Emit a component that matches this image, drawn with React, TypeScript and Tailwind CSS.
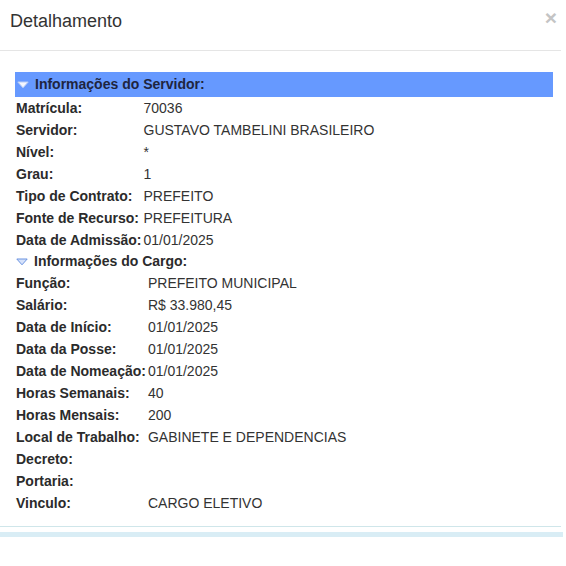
import React from "react";

const servidor: [string, string][] = [
  ["Matrícula:", "70036"],
  ["Servidor:", "GUSTAVO TAMBELINI BRASILEIRO"],
  ["Nível:", "*"],
  ["Grau:", "1"],
  ["Tipo de Contrato:", "PREFEITO"],
  ["Fonte de Recurso:", "PREFEITURA"],
  ["Data de Admissão:", "01/01/2025"],
];

const cargo: [string, string][] = [
  ["Função:", "PREFEITO MUNICIPAL"],
  ["Salário:", "R$ 33.980,45"],
  ["Data de Início:", "01/01/2025"],
  ["Data da Posse:", "01/01/2025"],
  ["Data de Nomeação:", "01/01/2025"],
  ["Horas Semanais:", "40"],
  ["Horas Mensais:", "200"],
  ["Local de Trabalho:", "GABINETE E DEPENDENCIAS"],
  ["Decreto:", ""],
  ["Portaria:", ""],
  ["Vinculo:", "CARGO ELETIVO"],
];

function Tri({ fill, stroke }: { fill: string; stroke: string }) {
  return (
    <svg width="12" height="8" viewBox="0 0 12 8" className="shrink-0">
      <path d="M0.8 1 L11.2 1 L6 6.8 Z" fill={fill} stroke={stroke} strokeWidth="1" strokeLinejoin="round" />
    </svg>
  );
}

function Grid({ rows }: { rows: [string, string][] }) {
  return (
    <div className="grid grid-cols-[max-content_1fr] gap-x-[2px] pl-px">
      {rows.map(([k, v]) => (
        <React.Fragment key={k}>
          <div className="h-[22px] leading-[22px] font-bold text-[#2b2b2b]">{k}</div>
          <div className="h-[22px] leading-[22px] text-[#333]">{v}</div>
        </React.Fragment>
      ))}
    </div>
  );
}

export default function App() {
  return (
    <div
      className="relative w-[566px] h-[566px] bg-white overflow-hidden text-[14px]"
      style={{ fontFamily: '"Liberation Sans", Arial, sans-serif' }}
    >
      <div className="w-[561px]">
        <div className="flex h-[51px] items-start justify-between border-b border-[#e5e5e5] pl-[10px] pr-[4px]">
          <div className="pt-[9px] text-[18px] leading-[24px] text-[#333]">Detalhamento</div>
          <div className="pt-[8px] text-[21px] font-bold leading-[20px] text-[#c4c4c4]">×</div>
        </div>
        <div className="border-b border-[#cfe6ea] pb-[12px] pl-[15px] pr-[8px] pt-[21px]">
          <div className="flex h-[25px] items-center gap-[6px] bg-[#6699ff] pl-[2px] font-bold text-[#1e2540]">
            <Tri fill="#f4f7ff" stroke="#b9cdf5" />
            <span>Informações do Servidor:</span>
          </div>
          <Grid rows={servidor} />
          <div className="flex h-[21px] items-center gap-[6px] pl-[1px] font-bold text-[#2b2b2b]">
            <Tri fill="#d6e2fb" stroke="#6a93e0" />
            <span>Informações do Cargo:</span>
          </div>
          <Grid rows={cargo} />
        </div>
      </div>
      <div className="mt-[5px] h-[5px] w-[563px] bg-[#d9edf5]" />
    </div>
  );
}
